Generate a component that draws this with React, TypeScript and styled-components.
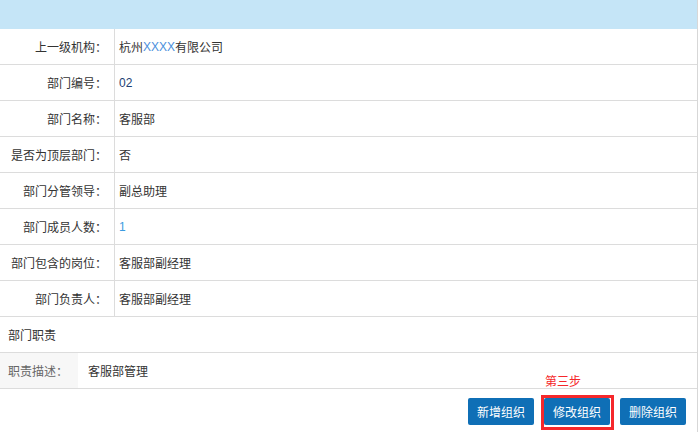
import React from 'react'
import styled, { createGlobalStyle } from 'styled-components'

const GlobalStyle = createGlobalStyle`
  html, body {
    margin: 0;
    padding: 0;
    background: #fff;
  }
  body {
    font-family: "Liberation Sans", "Noto Sans CJK SC", sans-serif;
    font-size: 12px;
    color: #333;
  }
`

const Panel = styled.div`
  width: 697px;
  height: 432px;
  border-right: 1px solid #d7d7d7;
  display: flex;
  flex-direction: column;
`

const TopBar = styled.div`
  height: 29px;
  background: #c5e5f7;
`

const InfoRow = styled.div`
  display: grid;
  grid-template-columns: 115px 1fr;
  height: 35px;
  border-bottom: 1px solid #dcdcdc;
`

const Label = styled.div`
  display: flex;
  align-items: center;
  justify-content: flex-end;
  padding-right: 7px;
  border-right: 1px solid #dcdcdc;
  white-space: nowrap;
`

const Value = styled.div<{ $tone?: 'navy' | 'blue' }>`
  display: flex;
  align-items: center;
  padding-left: 4px;
  color: ${({ $tone }) => ($tone === 'navy' ? '#1d3f73' : $tone === 'blue' ? '#3b9be0' : '#333')};
`

const Masked = styled.span`
  color: #4b8fdc;
`

const SectionTitle = styled.div`
  height: 35px;
  display: flex;
  align-items: center;
  padding-left: 8px;
  border-bottom: 1px solid #dcdcdc;
`

const DutyRow = styled.div`
  display: grid;
  grid-template-columns: 78px 1fr;
  height: 35px;
  border-bottom: 1px solid #dcdcdc;
`

const DutyLabel = styled.div`
  display: flex;
  align-items: center;
  padding-left: 8px;
  background: #f7f7f7;
  color: #666;
`

const DutyValue = styled.div`
  display: flex;
  align-items: center;
  padding-left: 10px;
`

const Actions = styled.div`
  display: flex;
  justify-content: flex-end;
  gap: 10px;
  padding: 9px 11px 0 0;
`

const ActionSlot = styled.div`
  position: relative;
`

const Button = styled.button`
  width: 66px;
  height: 27px;
  padding: 0;
  border: none;
  border-radius: 2px;
  background: #0f6fb6;
  color: #fff;
  font-family: "Liberation Sans", "Noto Sans CJK SC", sans-serif;
  font-size: 12px;
  cursor: pointer;
`

const Highlight = styled.div`
  position: absolute;
  left: -3px;
  top: -3px;
  width: 67px;
  height: 29px;
  border: 3px solid #f5282b;
  pointer-events: none;
`

const StepNote = styled.div`
  position: absolute;
  left: 1px;
  top: -26px;
  color: #f5282b;
  font-size: 12px;
  white-space: nowrap;
`

const rows: { label: string; value: React.ReactNode; tone?: 'navy' | 'blue' }[] = [
  { label: '上一级机构：', value: <>杭州<Masked>XXXX</Masked>有限公司</> },
  { label: '部门编号：', value: '02', tone: 'navy' },
  { label: '部门名称：', value: '客服部' },
  { label: '是否为顶层部门：', value: '否' },
  { label: '部门分管领导：', value: '副总助理' },
  { label: '部门成员人数：', value: '1', tone: 'blue' },
  { label: '部门包含的岗位：', value: '客服部副经理' },
  { label: '部门负责人：', value: '客服部副经理' },
]

const App = () => (
  <>
    <GlobalStyle />
    <Panel>
      <TopBar />
      {rows.map((r) => (
        <InfoRow key={r.label}>
          <Label>{r.label}</Label>
          <Value $tone={r.tone}>{r.value}</Value>
        </InfoRow>
      ))}
      <SectionTitle>部门职责</SectionTitle>
      <DutyRow>
        <DutyLabel>职责描述：</DutyLabel>
        <DutyValue>客服部管理</DutyValue>
      </DutyRow>
      <Actions>
        <Button>新增组织</Button>
        <ActionSlot>
          <StepNote>第三步</StepNote>
          <Button>修改组织</Button>
          <Highlight />
        </ActionSlot>
        <Button>删除组织</Button>
      </Actions>
    </Panel>
  </>
)

export default App
